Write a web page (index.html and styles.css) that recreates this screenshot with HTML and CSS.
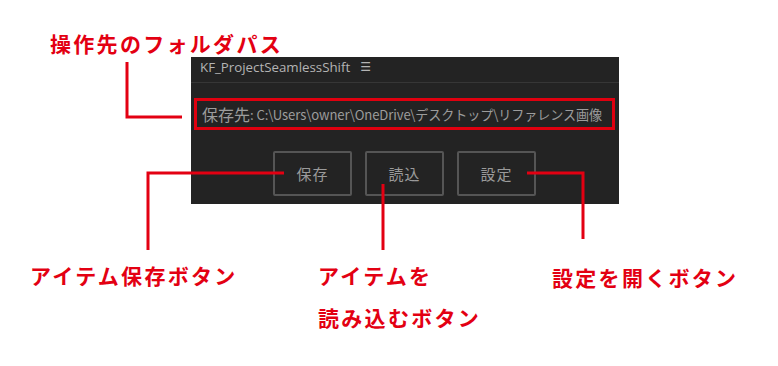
FILE: index.html
```html
<!DOCTYPE html>
<html lang="ja">
<head>
<meta charset="utf-8">
<link rel="stylesheet" href="styles.css">
</head>
<body>
<div class="page">
  <div class="label top-label">操作先のフォルダパス</div>
  <div class="panel">
    <div class="titlebar"><span class="title">KF_ProjectSeamlessShift</span><span class="menu">☰</span></div>
    <div class="pathbox"><span class="path-key">保存先</span><span class="path-val">: C:\Users\owner\OneDrive\デスクトップ\リファレンス画像</span></div>
    <div class="buttons">
      <div class="btn">保存</div>
      <div class="btn">読込</div>
      <div class="btn">設定</div>
    </div>
  </div>
  <div class="labels">
    <div class="label l1">アイテム保存ボタン</div>
    <div class="label l2">アイテムを<br>読み込むボタン</div>
    <div class="label l3">設定を開くボタン</div>
  </div>
  <svg class="callouts" width="778" height="366" viewBox="0 0 778 366">
    <polyline points="127,62 127,117 182,117" />
    <polyline points="284,173 148,173 148,250" />
    <polyline points="383,184 383,250" />
    <polyline points="527,173 583,173 583,239" />
  </svg>
</div>
</body>
</html>
```
FILE: styles.css
```css
html, body {
  margin: 0;
  padding: 0;
  background: #ffffff;
}
.page {
  position: relative;
  width: 778px;
  height: 366px;
  overflow: hidden;
  font-family: "Noto Sans CJK JP", "Noto Sans", sans-serif;
}
.label {
  color: #e30012;
  font-weight: 700;
  font-size: 21px;
  letter-spacing: 2.3px;
  line-height: 24px;
  white-space: nowrap;
}
.top-label {
  padding-top: 31px;
  margin-left: 50px;
  height: 26px;
}
.panel {
  margin-left: 191px;
  width: 428px;
  height: 147px;
  background: #232323;
  display: flex;
  flex-direction: column;
}
.titlebar {
  height: 26px;
  border-bottom: 1px solid #363636;
  box-sizing: border-box;
  display: flex;
  align-items: flex-start;
  padding: 1px 0 0 9px;
  color: #b4b4b4;
  font-family: "Open Sans", "Noto Sans", sans-serif;
  font-size: 13.3px;
  line-height: 18px;
  gap: 10px;
}
.menu {
  font-family: "DejaVu Sans", sans-serif;
  font-size: 12px;
}
.pathbox {
  margin: 15px 0 0 3px;
  width: 421px;
  height: 32px;
  box-sizing: border-box;
  border: 3px solid #e0000f;
  display: flex;
  align-items: center;
  padding-left: 5px;
  color: #9c9c9c;
  white-space: nowrap;
  overflow: hidden;
}
.path-key {
  font-size: 16px;
}
.path-val {
  font-size: 13.1px;
  letter-spacing: -0.1px;
}
.buttons {
  display: flex;
  gap: 13px;
  margin: 21px 0 0 82px;
}
.btn {
  width: 79px;
  height: 45px;
  box-sizing: border-box;
  border: 2px solid #555555;
  border-radius: 2px;
  display: flex;
  align-items: center;
  justify-content: center;
  color: #9a9a9a;
  font-size: 15px;
  letter-spacing: 1px;
}
.labels {
  display: grid;
  grid-template-columns: 288px 234px auto;
  padding-left: 30px;
  margin-top: 59px;
}
.l2 {
  line-height: 42px;
  margin-top: -9px;
}
.l3 {
  margin-top: 2px;
}
.callouts {
  position: absolute;
  left: 0;
  top: 0;
  pointer-events: none;
}
.callouts polyline {
  fill: none;
  stroke: #e30012;
  stroke-width: 3;
}
```
